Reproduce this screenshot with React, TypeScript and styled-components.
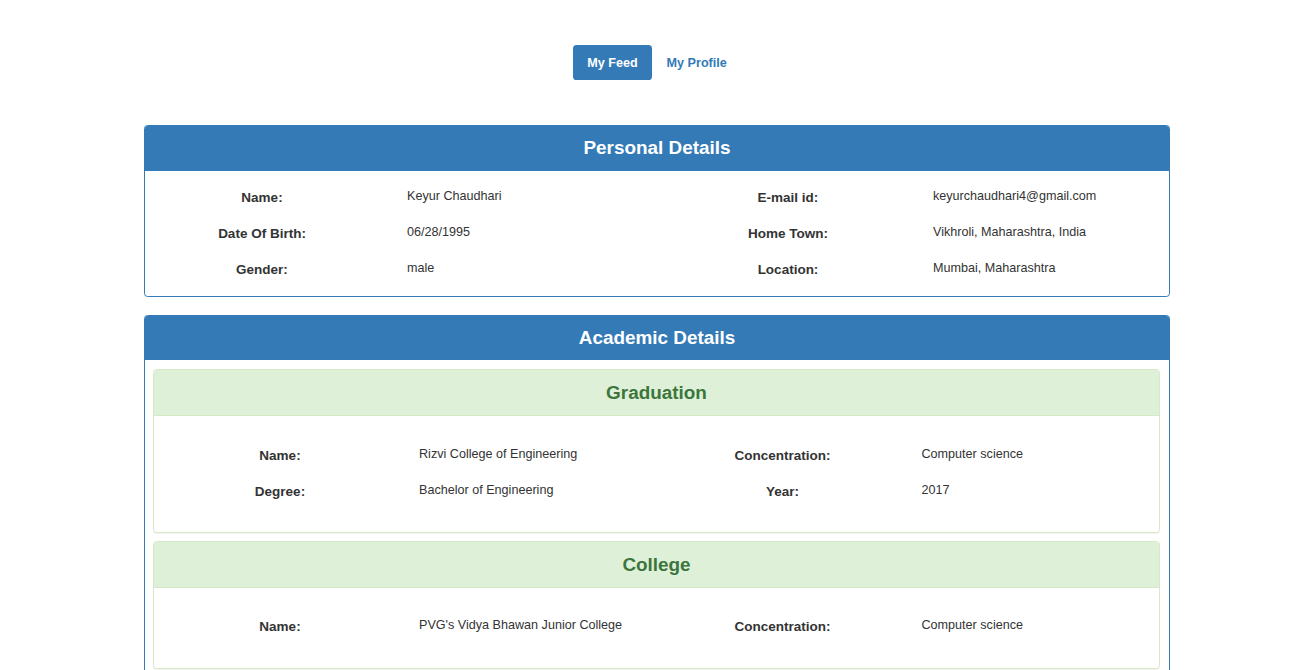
import React from "react";
import styled, { createGlobalStyle } from "styled-components";

const Global = createGlobalStyle`
  html, body { margin: 0; padding: 0; background: #fff; }
  body {
    font-family: "Liberation Sans", Arial, Helvetica, sans-serif;
    color: #333;
  }
`;

const Page = styled.div`
  width: 1026px;
  margin: 0 auto;
  padding: 45px 0 0 2px;
`;

const Nav = styled.ul`
  list-style: none;
  margin: 0 0 45px;
  padding: 0;
  display: flex;
  justify-content: center;
  gap: 1px;
`;

const Pill = styled.li<{ $active?: boolean }>`
  height: 35px;
  display: flex;
  align-items: center;
  padding: 0 14px;
  border-radius: 3.6px;
  font-size: 12.6px;
  font-weight: bold;
  background: ${(p) => (p.$active ? "#337ab7" : "transparent")};
  color: ${(p) => (p.$active ? "#fff" : "#337ab7")};
`;

const Panel = styled.section<{ $variant?: "primary" | "success" }>`
  border: 1px solid ${(p) => (p.$variant === "success" ? "#d6e9c6" : "#337ab7")};
  border-radius: 3.6px;
  background: #fff;
  margin-bottom: ${(p) => (p.$variant === "success" ? "8px" : "18px")};
  overflow: hidden;
  ${(p) => (p.$variant === "success" ? "box-shadow: 0 1px 1px rgba(0,0,0,0.05);" : "")}
  &:last-child { margin-bottom: 0; }
`;

const Heading = styled.h3<{ $variant?: "primary" | "success"; $h?: number }>`
  margin: 0;
  height: ${(p) => p.$h ?? 44}px;
  display: flex;
  align-items: center;
  justify-content: center;
  font-size: 18.9px;
  font-weight: bold;
  background: ${(p) => (p.$variant === "success" ? "#dff0d8" : "#337ab7")};
  color: ${(p) => (p.$variant === "success" ? "#3c763d" : "#fff")};
  border-bottom: 1px solid ${(p) => (p.$variant === "success" ? "#d6e9c6" : "#337ab7")};
`;

const Body = styled.div<{ $pad: string }>`
  padding: ${(p) => p.$pad};
`;

const Grid = styled.div<{ $label: number; $value: number; $indent: number }>`
  display: grid;
  grid-template-columns: ${(p) => `${p.$label}px ${p.$value}px ${p.$label}px 1fr`};
  grid-auto-rows: 36px;
  --indent: ${(p) => p.$indent}px;
`;

const Label = styled.div`
  display: flex;
  align-items: center;
  justify-content: center;
  font-size: 13.5px;
  font-weight: bold;
  color: #333;
`;

const Value = styled.div`
  display: flex;
  align-items: center;
  padding-left: var(--indent);
  padding-bottom: 3px;
  font-size: 12.6px;
  color: #333;
  white-space: nowrap;
`;

type Pair = [string, string];

const Fields: React.FC<{ rows: Pair[][]; label: number; value: number; indent: number }> = ({
  rows,
  label,
  value,
  indent,
}) => (
  <Grid $label={label} $value={value} $indent={indent}>
    {rows.map((row, i) =>
      row.map(([l, v], j) => (
        <React.Fragment key={`${i}-${j}`}>
          <Label>{l}</Label>
          <Value>{v}</Value>
        </React.Fragment>
      ))
    )}
  </Grid>
);

export default function App() {
  return (
    <>
      <Global />
      <Page>
        <Nav>
          <Pill $active>My Feed</Pill>
          <Pill>My Profile</Pill>
        </Nav>

        <Panel $variant="primary">
          <Heading $variant="primary">Personal Details</Heading>
          <Body $pad="8px 0 9px">
            <Fields
              label={234}
              value={292}
              indent={28}
              rows={[
                [["Name:", "Keyur Chaudhari"], ["E-mail id:", "keyurchaudhari4@gmail.com"]],
                [["Date Of Birth:", "06/28/1995"], ["Home Town:", "Vikhroli, Maharashtra, India"]],
                [["Gender:", "male"], ["Location:", "Mumbai, Maharashtra"]],
              ]}
            />
          </Body>
        </Panel>

        <Panel $variant="primary">
          <Heading $variant="primary" $h={43}>Academic Details</Heading>
          <Body $pad="9px 9px 9px 8px">
            <Panel $variant="success">
              <Heading $variant="success" $h={45}>Graduation</Heading>
              <Body $pad="21px 0 23px">
                <Fields
                  label={252}
                  value={250.5}
                  indent={13}
                  rows={[
                    [["Name:", "Rizvi College of Engineering"], ["Concentration:", "Computer science"]],
                    [["Degree:", "Bachelor of Engineering"], ["Year:", "2017"]],
                  ]}
                />
              </Body>
            </Panel>
            <Panel $variant="success">
              <Heading $variant="success" $h={45}>College</Heading>
              <Body $pad="20px 0 24px">
                <Fields
                  label={252}
                  value={250.5}
                  indent={13}
                  rows={[
                    [["Name:", "PVG's Vidya Bhawan Junior College"], ["Concentration:", "Computer science"]],
                  ]}
                />
              </Body>
            </Panel>
          </Body>
        </Panel>
      </Page>
    </>
  );
}
